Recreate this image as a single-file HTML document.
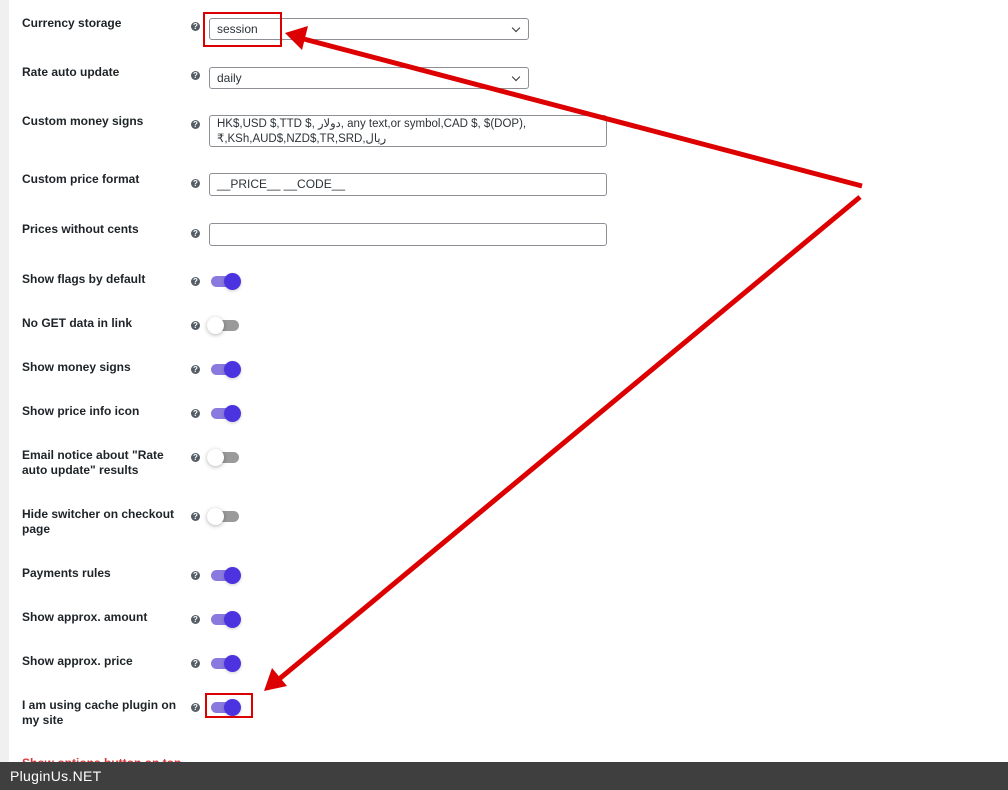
<!DOCTYPE html>
<html><head><meta charset="utf-8"><style>
body{margin:0;width:1008px;height:790px;overflow:hidden;background:#fff;font-family:"Liberation Sans",Arial,sans-serif;position:relative}
.strip{position:absolute;left:0;top:0;width:9px;height:790px;background:#f0f0f1}
.lbl{position:absolute;left:22px;font-size:12px;font-weight:bold;color:#1d2327;line-height:15px;width:160px}
.q{position:absolute;left:191px;width:9px;height:9px;border-radius:50%;background:#555d66;color:#fff;font-size:8px;line-height:9px;text-align:center;font-weight:bold}
.sel,.inp{position:absolute;left:209px;width:398px;height:22px;border:1px solid #8c8f94;border-radius:3px;font-size:12px;color:#2c3338;box-sizing:border-box;padding:0 7px;line-height:21px}
.sel{width:320px}
.sel:after{content:"";position:absolute;right:9px;top:6px;width:5px;height:5px;border-right:1.5px solid #333;border-bottom:1.5px solid #333;transform:rotate(45deg)}
.tg{position:absolute;left:211px;width:28px;height:11px;border-radius:6px}
.on{background:#8a7ae0}
.on:after{content:"";position:absolute;left:13px;top:-3px;width:17px;height:17px;border-radius:50%;background:#4b34e0;box-shadow:0 1px 3px rgba(0,0,0,.2)}
.off{background:#9a9a9a}
.off:after{content:"";position:absolute;left:-4px;top:-3px;width:17px;height:17px;border-radius:50%;background:#fff;box-shadow:0 1px 4px rgba(0,0,0,.3)}
.foot{position:absolute;left:0;top:762px;width:1008px;height:28px;background:#3f3f3f;color:#fff;font-size:14px;line-height:28px;padding-left:10px;box-sizing:border-box;letter-spacing:.3px}
</style></head><body>
<div class="strip"></div>
<div class="lbl" style="top:16px">Currency storage</div><div class="q" style="top:22px">?</div>
<div class="sel" style="top:18px">session</div>
<div class="lbl" style="top:65px">Rate auto update</div><div class="q" style="top:71px">?</div>
<div class="sel" style="top:67px">daily</div>
<div class="lbl" style="top:114px">Custom money signs</div><div class="q" style="top:120px">?</div>
<div class="inp" style="top:115px;height:32px;line-height:15px;font-size:11.5px;padding-top:1px">HK$,USD $,TTD $, دولار, any text,or symbol,CAD $, $(DOP),<br>₹,KSh,AUD$,NZD$,TR,SRD,ریال</div>
<div class="lbl" style="top:172px">Custom price format</div><div class="q" style="top:179px">?</div>
<div class="inp" style="top:173px;height:23px">__PRICE__ __CODE__</div>
<div class="lbl" style="top:222px">Prices without cents</div><div class="q" style="top:229px">?</div>
<div class="inp" style="top:223px;height:23px"></div>
<div class="lbl" style="top:272px">Show flags by default</div><div class="q" style="top:277px">?</div><div class="tg on" style="top:276px"></div>
<div class="lbl" style="top:316px">No GET data in link</div><div class="q" style="top:321px">?</div><div class="tg off" style="top:320px"></div>
<div class="lbl" style="top:360px">Show money signs</div><div class="q" style="top:365px">?</div><div class="tg on" style="top:364px"></div>
<div class="lbl" style="top:404px">Show price info icon</div><div class="q" style="top:409px">?</div><div class="tg on" style="top:408px"></div>
<div class="lbl" style="top:448px">Email notice about "Rate auto update" results</div><div class="q" style="top:453px">?</div><div class="tg off" style="top:452px"></div>
<div class="lbl" style="top:507px">Hide switcher on checkout page</div><div class="q" style="top:512px">?</div><div class="tg off" style="top:511px"></div>
<div class="lbl" style="top:566px">Payments rules</div><div class="q" style="top:571px">?</div><div class="tg on" style="top:570px"></div>
<div class="lbl" style="top:610px">Show approx. amount</div><div class="q" style="top:615px">?</div><div class="tg on" style="top:614px"></div>
<div class="lbl" style="top:654px">Show approx. price</div><div class="q" style="top:659px">?</div><div class="tg on" style="top:658px"></div>
<div class="lbl" style="top:698px">I am using cache plugin on my site</div><div class="q" style="top:703px">?</div><div class="tg on" style="top:702px"></div>
<div class="lbl" style="top:756px;color:#d63638">Show options button on top</div>
<svg style="position:absolute;left:0;top:0" width="1008" height="790">
<rect x="204" y="13" width="77" height="33" fill="none" stroke="#d00" stroke-width="2"/>
<rect x="206" y="694" width="46" height="23" fill="none" stroke="#d00" stroke-width="2"/>
<line x1="862" y1="186" x2="300" y2="38" stroke="#d00" stroke-width="5"/>
<polygon points="285,33 308,26 302,50" fill="#d00"/>
<line x1="860" y1="197" x2="278" y2="680" stroke="#d00" stroke-width="5"/>
<polygon points="264,691 272,668 287,686" fill="#d00"/>
</svg>
<div class="foot">PluginUs.NET</div>
</body></html>
